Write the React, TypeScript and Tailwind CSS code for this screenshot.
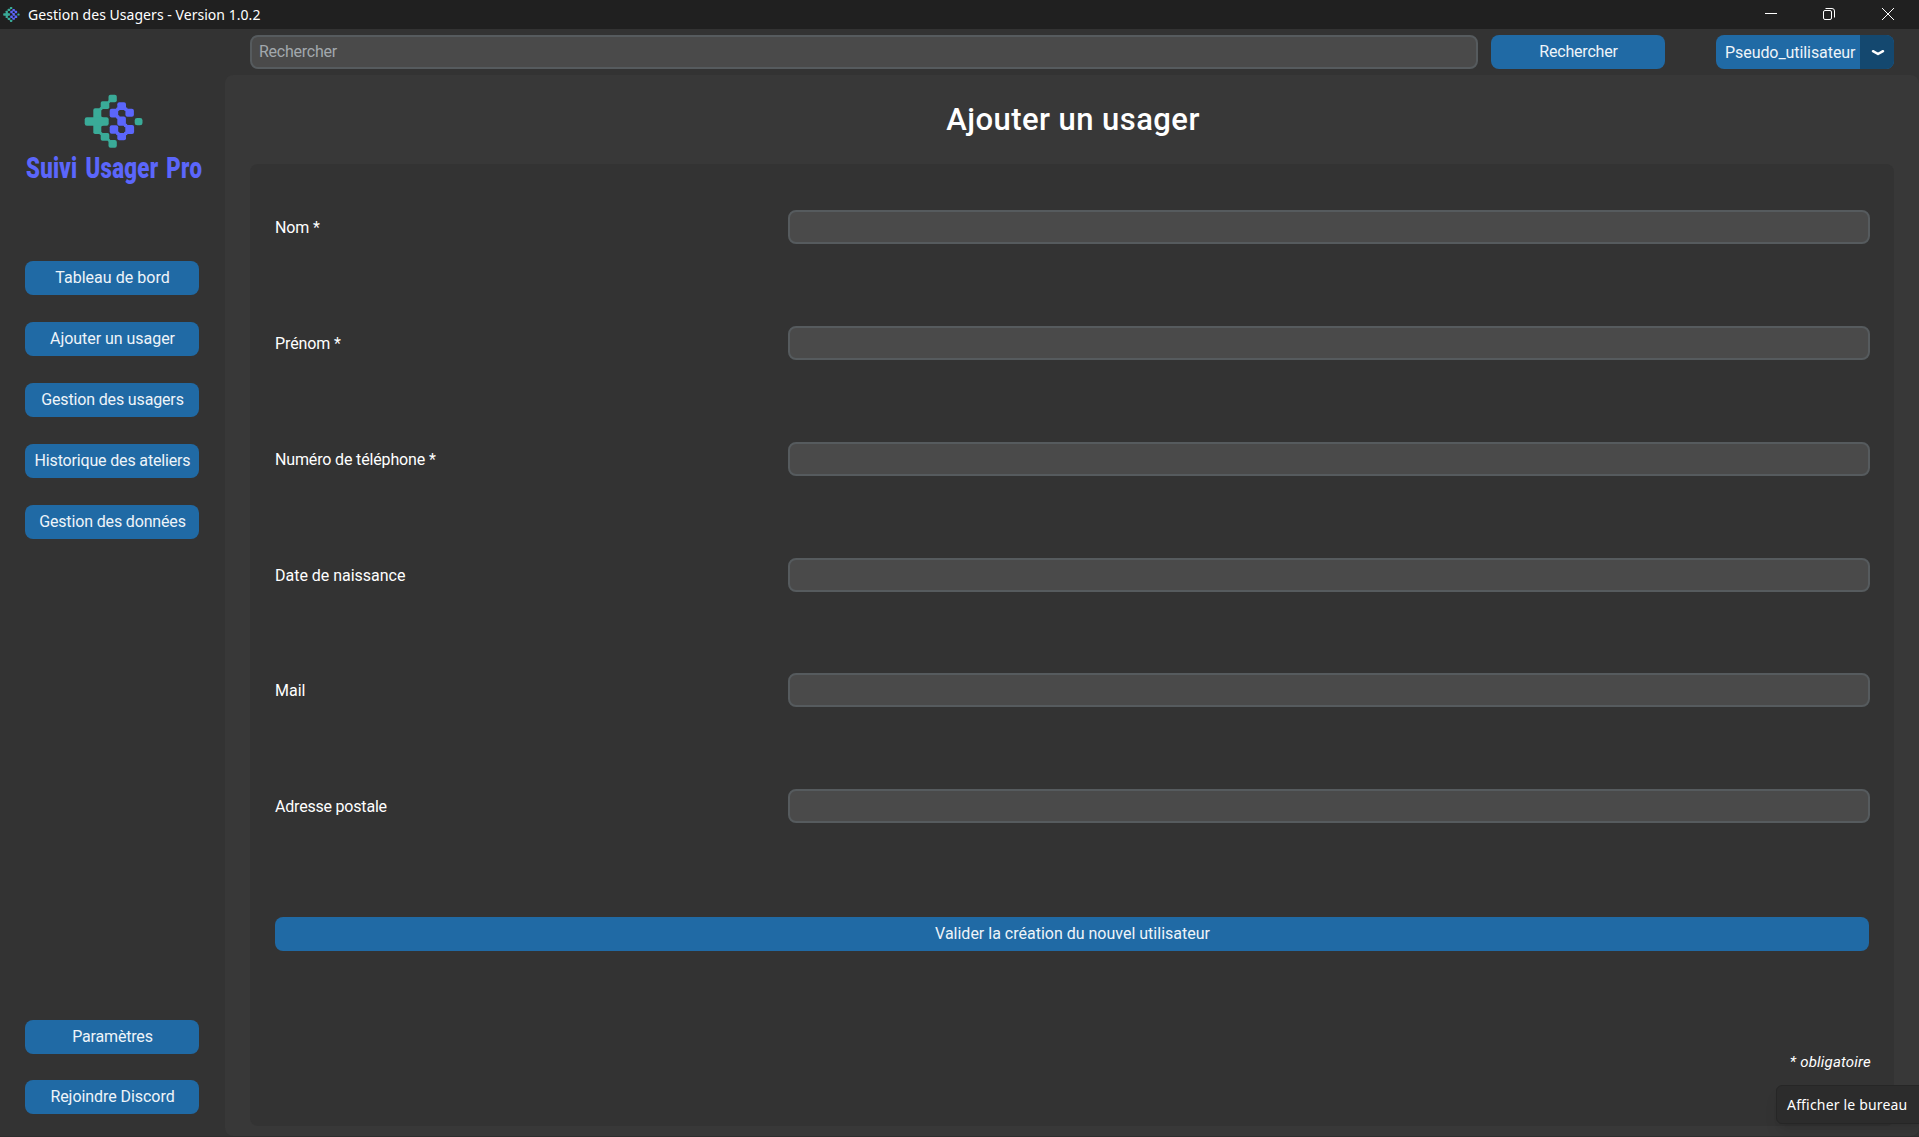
import React from "react";

const TEAL = "#3aab98";
const INDIGO = "#5b66fb";

function LogoMark({ className }: { className?: string }) {
  return (
    <svg viewBox="84 94 60 55" className={className}>
      <g fill={TEAL}>
        <rect x="108.500" y="94.700" width="8.300" height="7.600" rx="2" />
        <rect x="100.700" y="101.300" width="8.600" height="7.700" rx="1.800" />
        <rect x="93.300" y="108.300" width="8" height="25.700" rx="1.800" />
        <rect x="84.700" y="117.200" width="24" height="8.600" rx="2.200" />
        <rect x="100.700" y="133" width="8.600" height="7.700" rx="1.800" />
        <rect x="108.500" y="140" width="8.300" height="7.700" rx="2" />
        <rect x="134.700" y="118" width="7.800" height="7.300" rx="2.400" />
        <circle cx="109" cy="101.800" r="1.300" />
        <circle cx="101" cy="108.700" r="1.600" />
        <circle cx="101" cy="133.500" r="1.600" />
        <circle cx="109" cy="140.400" r="1.300" />
        <path d="M100.500 114.500q.4 2.700 3 3.200v7.600q-2.600.5-3 3.200z" />
      </g>
      <g fill={INDIGO}>
        <rect x="117.300" y="102.300" width="8.700" height="7.600" rx="2" />
        <rect x="109.700" y="108.700" width="8.500" height="8.800" rx="2" />
        <rect x="125.400" y="108.700" width="8.500" height="8" rx="2" />
        <rect x="117.300" y="116.600" width="8.600" height="9.100" rx="2" />
        <rect x="109.700" y="125.300" width="8.500" height="8.400" rx="2" />
        <rect x="125.300" y="125" width="8.800" height="8.900" rx="2" />
        <rect x="117.300" y="133" width="8.700" height="7.300" rx="2" />
        <circle cx="117.800" cy="109.200" r="1.900" />
        <circle cx="125.800" cy="109.200" r="1.900" />
        <circle cx="117.800" cy="117" r="1.900" />
        <circle cx="125.600" cy="125.400" r="1.900" />
        <circle cx="117.800" cy="133.400" r="1.900" />
        <circle cx="125.700" cy="133.400" r="1.900" />
      </g>
    </svg>
  );
}

function Button({ children, className = "w-[174px] tracking-[-0.18px]" }: { children: React.ReactNode; className?: string }) {
  return (
    <button className={`flex h-[34px] shrink-0 items-center justify-center whitespace-nowrap rounded-[8px] bg-[#206aa5] pb-px pl-px text-[#eef4f9] ${className}`}>
      {children}
    </button>
  );
}

const nav = [
  { label: "Tableau de bord", style: "w-[174px] tracking-[0.03px]" },
  { label: "Ajouter un usager", style: "w-[174px] tracking-[-0.04px]" },
  { label: "Gestion des usagers", style: "w-[174px] tracking-[-0.15px]" },
  { label: "Historique des ateliers", style: "w-[174px] tracking-[-0.16px]" },
  { label: "Gestion des données", style: "w-[174px] tracking-[-0.15px]" },
];

const fields = [
  { label: "Nom *", style: "mb-[82px] tracking-[-0.15px]" },
  { label: "Prénom *", style: "mb-[82px] tracking-[-0.12px]" },
  { label: "Numéro de téléphone *", style: "mb-[82px] tracking-[-0.15px]" },
  { label: "Date de naissance", style: "mb-[81px] tracking-[-0.02px]" },
  { label: "Mail", style: "mb-[82px]" },
  { label: "Adresse postale", style: "tracking-[-0.2px]" },
];

export default function App() {
  return (
    <div className="relative flex h-[1137px] w-[1919px] flex-col overflow-hidden border-b border-[#2d2d2d] bg-[#333333] font-['Roboto',sans-serif] text-[16px] leading-[20px] text-white">
      <header className="flex h-[29px] shrink-0 items-center bg-[#202020] font-['Noto_Sans',sans-serif] text-[14px]">
        <LogoMark className="ml-[3px] h-[17px] w-[17px]" />
        <span className="ml-[8px] whitespace-nowrap tracking-[0.04px]">Gestion des Usagers - Version 1.0.2</span>
        <svg className="ml-auto h-[29px] w-[154px]" viewBox="1765 0 154 29" fill="none" stroke="#fff">
          <path d="M1765 13.500h12" />
          <rect x="1823.500" y="10.500" width="8" height="9" rx="1.500" />
          <path d="M1825.500 8.500h6.500a2.500 2.500 0 0 1 2.500 2.500v6.500" />
          <path d="M1882 8l12 12M1894 8l-12 12" />
        </svg>
      </header>
      <div className="flex min-h-0 flex-1">
        <aside className="flex w-[225px] shrink-0 flex-col pb-[22px] pl-[25px]">
          <div className="mt-[65px] flex h-[167px] w-[190px] flex-col">
            <LogoMark className="ml-[59px] h-[55px] w-[60px] shrink-0" />
            <div className="h-[44px] w-[190px] shrink-0 whitespace-nowrap pl-px pt-px">
              <span className="inline-block origin-left scale-x-[0.741] text-[30px] font-black leading-[36px] tracking-[0.35px] [word-spacing:3px] text-[#5b66fb]">Suivi Usager Pro</span>
            </div>
          </div>
          <nav className="flex flex-col gap-[27px]">
            {nav.map(({ label, style }) => <Button key={label} className={style}>{label}</Button>)}
          </nav>
          <div className="mt-auto flex flex-col gap-[26px]">
            <Button>Paramètres</Button>
            <Button className="w-[174px] tracking-[-0.06px]">Rejoindre Discord</Button>
          </div>
        </aside>
        <div className="flex flex-1 flex-col">
          <div className="flex h-[46px] shrink-0 items-center pl-[25px]">
            <div className="flex h-[34px] w-[1228px] items-center rounded-[8px] border-2 border-[#565b5e] bg-[#4a4a4a] pb-px pl-[7px] tracking-[-0.25px] text-[#a2a8ad]">Rechercher</div>
            <Button className="ml-[13px] w-[174px] tracking-[-0.2px]">Rechercher</Button>
            <div className="ml-[51px] flex h-[34px] w-[178px] overflow-hidden rounded-[8px] bg-[#206aa5] text-[#eef4f9]">
              <span className="flex w-[144px] items-center pl-[9px] pt-px tracking-[-0.07px]">Pseudo_utilisateur</span>
              <span className="flex flex-1 items-center justify-center bg-[#14486f] pl-[2px]">
                <svg className="mt-[2px] h-[8px] w-[14px]" viewBox="0 0 14 8" fill="none" stroke="#fff" strokeWidth="2.500" strokeLinecap="round" strokeLinejoin="round"><path d="M2 2.200l5 2.800L12 2.200" /></svg>
              </span>
            </div>
          </div>
          <main className="flex flex-1 flex-col rounded-[8px] bg-[#383838] px-[25px] pb-[10px]">
            <h1 className="flex h-[89px] shrink-0 items-center justify-center pl-[2px] pt-px text-[31px] font-medium tracking-[0.45px]">Ajouter un usager</h1>
            <section className="flex w-[1644px] flex-1 flex-col rounded-[8px] bg-[#333333] px-[25px] pt-[46px]">
              {fields.map(({ label, style }) => (
                <label key={label} className={`flex h-[34px] w-[1595px] items-center ${style}`}>
                  <span className="w-[513px] shrink-0 pt-px">{label}</span>
                  <span className="h-[34px] w-[1082px] shrink-0 rounded-[8px] border-2 border-[#565b5e] bg-[#4a4a4a]" />
                </label>
              ))}
              <Button className="mt-[94px] w-[1594px]">Valider la création du nouvel utilisateur</Button>
              <p className="mt-[101px] w-[1596px] text-right text-[15px] italic tracking-[0.2px]">* obligatoire</p>
            </section>
          </main>
        </div>
      </div>
      <div className="absolute left-[1776px] top-[1085px] flex h-[39px] w-[150px] items-center rounded-[6px] border border-[#262626] bg-[#2c2c2c] pl-[10px] font-['Noto_Sans',sans-serif] text-[14px] tracking-[0.18px] shadow-lg">
        <span className="whitespace-nowrap">Afficher le bureau</span>
      </div>
    </div>
  );
}
